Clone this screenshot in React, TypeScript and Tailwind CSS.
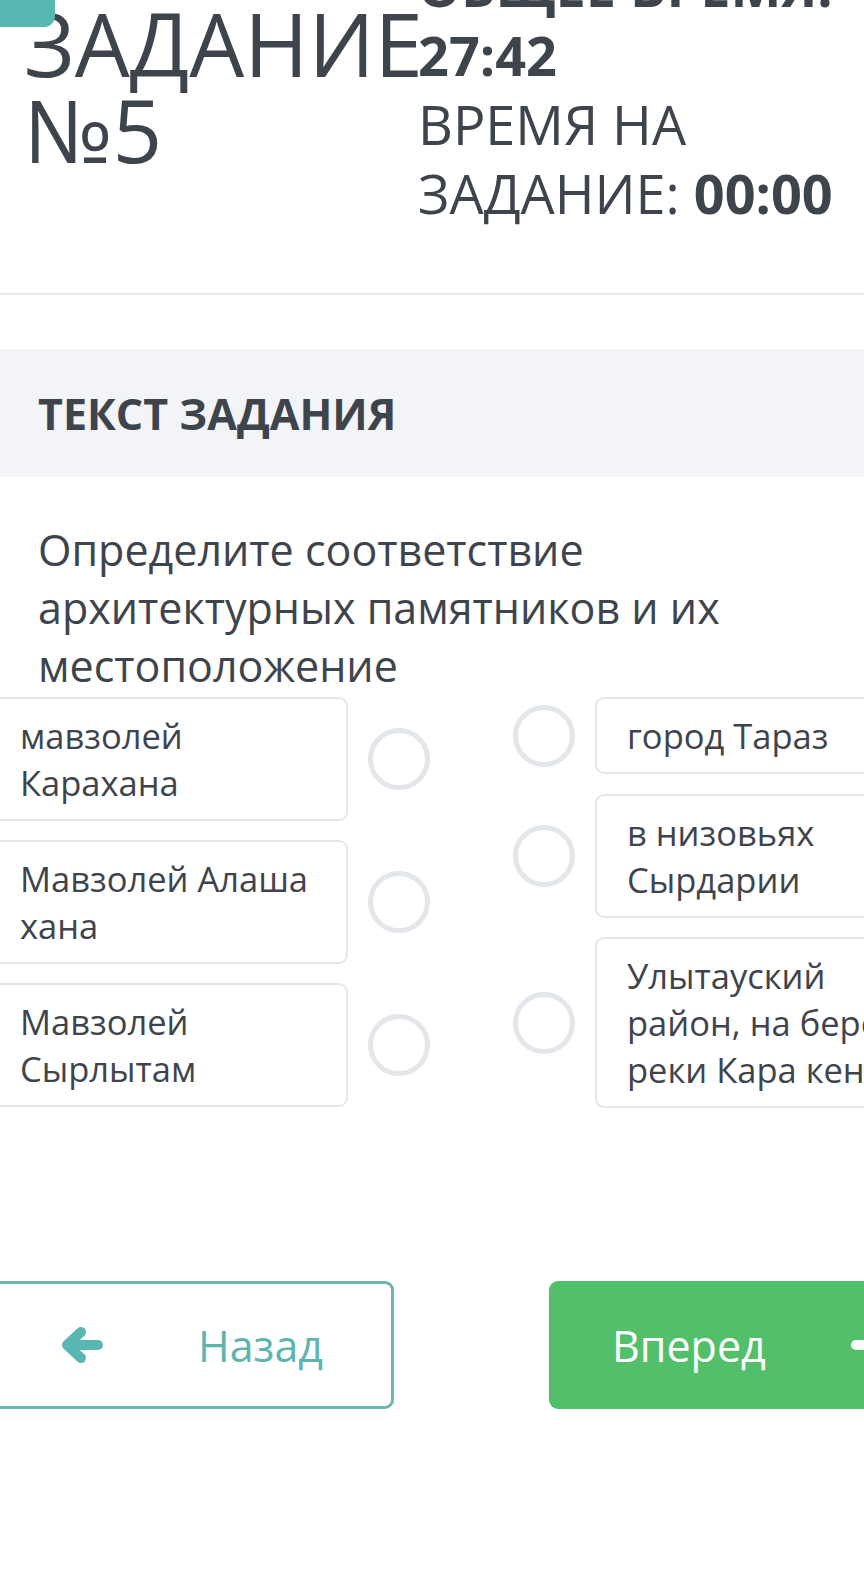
import React from "react";

function Circle() {
  return <div className="w-[62px] h-[62px] shrink-0 rounded-full border-[5px] border-[#e3e6ea] bg-white" />;
}

function LeftItem({ children }: { children: React.ReactNode }) {
  return (
    <div className="flex items-center gap-[20px]">
      <div className="w-[360px] rounded-[9px] border-2 border-[#e4e6e9] pl-[30px] pr-[10px] py-[13px] text-[34.5px] leading-[47px]">
        {children}
      </div>
      <Circle />
    </div>
  );
}

function RightItem({ children }: { children: React.ReactNode }) {
  return (
    <div className="flex items-center gap-[20px]">
      <Circle />
      <div className="w-[340px] shrink-0 rounded-[9px] border-2 border-[#e4e6e9] pl-[30px] py-[13px] text-[34.5px] leading-[47px] whitespace-nowrap">
        {children}
      </div>
    </div>
  );
}

export default function App() {
  return (
    <div className="relative w-[864px] h-[1576px] overflow-hidden bg-white text-[#3e444c] font-['Open_Sans',sans-serif]">
      <div className="absolute left-0 top-0 z-10 w-[55px] h-[27px] rounded-br-[11px] bg-[#55b7b0]" />

      {/* header */}
      <div className="flex h-[293px]">
        <div className="w-[418px] shrink-0 pl-[24px] text-[87px] leading-[86px] whitespace-nowrap">
          ЗАДАНИЕ
          <br />
          №5
        </div>
        <div className="-mt-[48px] text-[54px] leading-[69px] whitespace-nowrap">
          <div className="font-bold">ОБЩЕЕ ВРЕМЯ:</div>
          <div className="font-bold">27:42</div>
          <div>ВРЕМЯ НА</div>
          <div>
            ЗАДАНИЕ: <span className="font-bold">00:00</span>
          </div>
        </div>
      </div>
      <div className="h-[2px] bg-[#e6e8eb]" />

      {/* section title */}
      <div className="mt-[54px] h-[128px] bg-[#f2f4f7] flex items-center pl-[38px]">
        <span className="text-[43px] font-bold leading-none">ТЕКСТ ЗАДАНИЯ</span>
      </div>

      {/* question */}
      <div className="mt-[44px] pl-[38px] text-[43px] leading-[58px] whitespace-nowrap">
        Определите соответствие
        <br />
        архитектурных памятников и их
        <br />
        местоположение
      </div>

      {/* matching */}
      <div className="mt-[2px] flex items-start">
        <div className="-ml-[12px] flex flex-col gap-[19px]">
          <LeftItem>
            мавзолей
            <br />
            Карахана
          </LeftItem>
          <LeftItem>
            Мавзолей Алаша
            <br />
            хана
          </LeftItem>
          <LeftItem>
            Мавзолей
            <br />
            Сырлытам
          </LeftItem>
        </div>
        <div className="ml-[83px] flex flex-col gap-[19.5px]">
          <RightItem>город Тараз</RightItem>
          <RightItem>
            в низовьях
            <br />
            Сырдарии
          </RightItem>
          <RightItem>
            Улытауский
            <br />
            район, на берегу
            <br />
            реки Кара кенгир
          </RightItem>
        </div>
      </div>

      {/* buttons */}
      <div className="mt-[173px] flex items-start">
        <div className="-ml-[12px] w-[406px] h-[128px] shrink-0 rounded-[9px] border-[3px] border-[#6db7b1] flex items-center pl-[69px] text-[#5db5ae]">
          <svg width="44" height="38" viewBox="0 0 44 38" className="shrink-0">
            <path
              d="M21 6 L7 19 L21 32 M7 19 H38"
              fill="none"
              stroke="#5ab6b0"
              strokeWidth="10"
              strokeLinecap="round"
              strokeLinejoin="round"
            />
          </svg>
          <span className="ml-[94px] text-[43px] leading-none">Назад</span>
        </div>
        <div className="ml-[155px] w-[360px] h-[128px] shrink-0 rounded-[9px] bg-[#52c06a] flex items-center pl-[63px] text-white">
          <span className="text-[43px] leading-none">Вперед</span>
          <svg width="44" height="38" viewBox="0 0 44 38" className="ml-[84px] shrink-0">
            <path
              d="M23 6 L37 19 L23 32 M37 19 H6"
              fill="none"
              stroke="#ffffff"
              strokeWidth="10"
              strokeLinecap="round"
              strokeLinejoin="round"
            />
          </svg>
        </div>
      </div>
    </div>
  );
}
